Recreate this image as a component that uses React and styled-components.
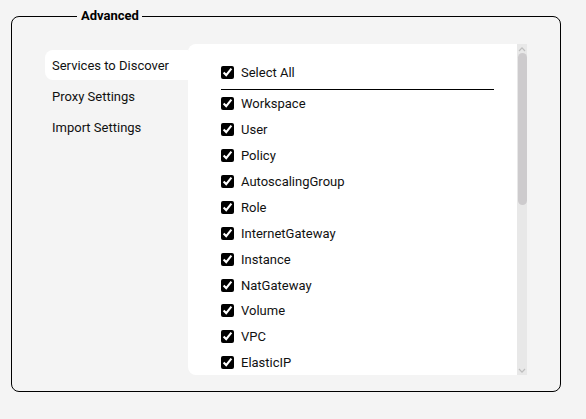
import React, { useState } from "react";
import styled, { createGlobalStyle } from "styled-components";

const GlobalStyle = createGlobalStyle`
    html, body {
        margin: 0;
        padding: 0;
        background: #f4f4f4;
        font-family: Roboto, "Liberation Sans", sans-serif;
    }
`;

const Page = styled.div`
    box-sizing: border-box;
    width: 586px;
    height: 419px;
    padding: 8px 25px 27px 11px;
`;

const Fieldset = styled.fieldset`
    box-sizing: border-box;
    height: 384px;
    margin: 0;
    padding: 20px 33px 16px 33px;
    border: 1.3px solid #000;
    border-radius: 8px;
    display: flex;
`;

const Legend = styled.legend`
    margin-left: 32px;
    padding: 0 3px 0 4px;
    font-size: 13px;
    font-weight: 700;
    color: #000;
    line-height: 16px;
`;

const TabList = styled.div`
    width: 143px;
    flex-shrink: 0;
    display: flex;
    flex-direction: column;
    padding-top: 6px;
`;

const Tab = styled.div`
    height: 30px;
    display: flex;
    align-items: center;
    padding-left: 7px;
    margin-bottom: 1px;
    font-size: 13px;
    color: #111;
    border-radius: 8px 0 0 8px;
    background: ${props => props.active ? "#fff" : "transparent"};
    cursor: pointer;
`;

const Panel = styled.div`
    flex: 1;
    min-width: 0;
    display: flex;
    background: #fff;
    border-radius: 8px 0 0 8px;
`;

const Scroller = styled.div`
    flex: 1;
    overflow-y: auto;
    scrollbar-width: none;
    &::-webkit-scrollbar {
        display: none;
    }
`;

const Track = styled.div`
    width: 10px;
    flex-shrink: 0;
    display: flex;
    flex-direction: column;
    background: #e8e8e8;
`;

const ArrowBox = styled.div`
    height: 9px;
    display: flex;
    align-items: center;
    justify-content: center;
`;

const Thumb = styled.div`
    height: 152px;
    margin: 0 0.5px;
    background: #cdcbcd;
    border-radius: 5px;
`;

const Spacer = styled.div`
    flex: 1;
`;

const List = styled.div`
    padding: 16px 23px 10px 29px;
`;

const Row = styled.label`
    display: flex;
    align-items: center;
    height: 25.9px;
    font-size: 13px;
    color: #111;
    gap: 4px;
`;

const Check = styled.input`
    width: 13px;
    height: 13px;
    margin: 3px 3px 3px 4px;
    accent-color: #000;
`;

const Divider = styled.hr`
    border: none;
    border-top: 1px solid #000;
    margin: 3px 0 1px 4px;
`;

const Chevron = ({ up }) => (
    <svg width="8" height="6" viewBox="0 0 8 6">
        <path
            d={up ? "M1 5 L4 1.8 L7 5" : "M1 1 L4 4.2 L7 1"}
            fill="none"
            stroke="#bdbdbd"
            strokeWidth="1.2"
        />
    </svg>
);

const tabs = ["Services to Discover", "Proxy Settings", "Import Settings"];

const services = [
    "Workspace", "User", "Policy", "AutoscalingGroup", "Role", "InternetGateway",
    "Instance", "NatGateway", "Volume", "VPC", "ElasticIP", "Subnet",
    "SecurityGroup", "RouteTable", "NetworkInterface", "LoadBalancer",
    "TargetGroup", "LaunchTemplate", "KeyPair", "Bucket", "Snapshot",
    "Image", "DBInstance", "Function"
];

export default function App() {
    const [active, setActive] = useState(0);
    const [checked, setChecked] = useState(() => services.map(() => true));
    const allChecked = checked.every(Boolean);

    const toggle = (i) => setChecked(c => c.map((v, j) => j === i ? !v : v));

    return (
        <Page>
            <GlobalStyle />
            <Fieldset>
                <Legend>Advanced</Legend>
                <TabList>
                    {tabs.map((t, i) => (
                        <Tab key={t} active={i === active} onClick={() => setActive(i)}>{t}</Tab>
                    ))}
                </TabList>
                <Panel>
                    <Scroller>
                        <List>
                            <Row>
                                <Check
                                    type="checkbox"
                                    checked={allChecked}
                                    onChange={() => setChecked(services.map(() => !allChecked))}
                                />
                                Select All
                            </Row>
                            <Divider />
                            {services.map((s, i) => (
                                <Row key={s}>
                                    <Check type="checkbox" checked={checked[i]} onChange={() => toggle(i)} />
                                    {s}
                                </Row>
                            ))}
                        </List>
                    </Scroller>
                    <Track>
                        <ArrowBox><Chevron up /></ArrowBox>
                        <Thumb />
                        <Spacer />
                        <ArrowBox><Chevron /></ArrowBox>
                    </Track>
                </Panel>
            </Fieldset>
        </Page>
    );
}
